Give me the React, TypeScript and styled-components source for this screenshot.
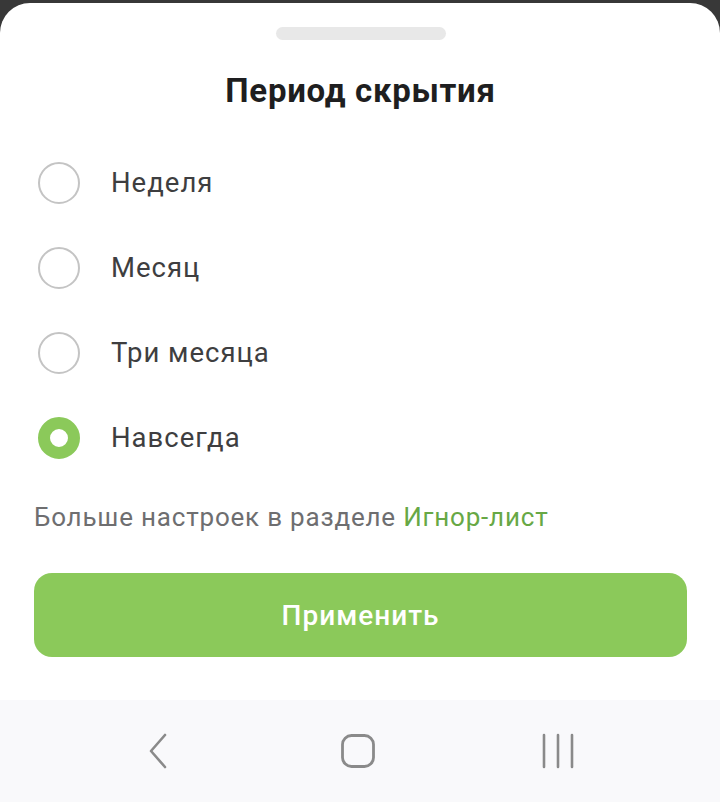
import React, { useState } from 'react'
import styled, { createGlobalStyle } from 'styled-components'

const GlobalStyle = createGlobalStyle`
  html, body {
    margin: 0;
    padding: 0;
    background: #383838;
  }
  body {
    font-family: Roboto, "Noto Sans", "Liberation Sans", sans-serif;
    -webkit-font-smoothing: antialiased;
  }
`

const periods = ['Неделя', 'Месяц', 'Три месяца', 'Навсегда']

const App: React.FC = () => {
  const [selected, setSelected] = useState(3)

  return (
    <Screen>
      <GlobalStyle />
      <Sheet>
        <Handle />
        <Title>Период скрытия</Title>
        <OptionList>
          {periods.map((label, i) => (
            <Option key={label} onClick={() => setSelected(i)}>
              <Radio checked={selected === i} />
              <OptionLabel>{label}</OptionLabel>
            </Option>
          ))}
        </OptionList>
        <Hint>
          Больше настроек в разделе <HintLink>Игнор-лист</HintLink>
        </Hint>
        <ApplyButton>Применить</ApplyButton>
      </Sheet>
      <NavBar>
        <NavIcon>
          <svg width="22" height="36" viewBox="0 0 22 36" fill="none">
            <path d="M18 2 L4 18 L18 34" stroke="#8a8a8a" strokeWidth="2.6" strokeLinecap="round" strokeLinejoin="round" />
          </svg>
        </NavIcon>
        <NavIcon>
          <svg width="36" height="36" viewBox="0 0 36 36" fill="none">
            <rect x="2.5" y="2.5" width="31" height="31" rx="9" stroke="#8a8a8a" strokeWidth="2.8" />
          </svg>
        </NavIcon>
        <NavIcon>
          <svg width="32" height="36" viewBox="0 0 32 36" fill="none">
            <path d="M2 2 V34 M16 2 V34 M30 2 V34" stroke="#8a8a8a" strokeWidth="2.6" strokeLinecap="round" />
          </svg>
        </NavIcon>
      </NavBar>
    </Screen>
  )
}

const Screen = styled.div`
  height: 100vh;
  display: flex;
  flex-direction: column;
  padding-top: 3px;
  box-sizing: border-box;
`

const Sheet = styled.div`
  flex: 1;
  background: #ffffff;
  border-radius: 30px 30px 0 0;
  display: flex;
  flex-direction: column;
  padding: 24px 33px 0 34px;
`

const Handle = styled.div`
  align-self: center;
  width: 170px;
  height: 13px;
  border-radius: 7px;
  background: #e8e8e8;
`

const Title = styled.h1`
  margin: 31px 0 0;
  text-align: center;
  font-size: 33px;
  line-height: 40px;
  letter-spacing: 0.7px;
  font-weight: 700;
  color: #1e1e20;
`

const OptionList = styled.div`
  margin-top: 29px;
  display: flex;
  flex-direction: column;
`

const Option = styled.label`
  height: 85px;
  display: flex;
  align-items: center;
  gap: 31px;
  padding-left: 4px;
  cursor: pointer;
`

const Radio = styled.span<{ checked: boolean }>`
  width: 42px;
  height: 42px;
  box-sizing: border-box;
  border-radius: 50%;
  flex-shrink: 0;
  background: #fff;
  border: ${p => (p.checked ? '12px solid #8bc95a' : '2px solid #c4c4c4')};
`

const OptionLabel = styled.span`
  font-size: 27.5px;
  letter-spacing: 1px;
  color: #3e3e40;
`

const Hint = styled.div`
  margin-top: 22px;
  font-size: 26px;
  line-height: 30px;
  letter-spacing: 0.8px;
  color: #6e6e70;
`

const HintLink = styled.span`
  color: #67a845;
`

const ApplyButton = styled.button`
  margin-top: 41px;
  height: 84px;
  border: none;
  border-radius: 18px;
  background: #8bc95a;
  color: #ffffff;
  font-family: inherit;
  font-size: 28px;
  letter-spacing: 1px;
  font-weight: 500;
  cursor: pointer;
`

const NavBar = styled.div`
  height: 102px;
  flex-shrink: 0;
  background: #f9f9fb;
  display: grid;
  grid-template-columns: repeat(3, 200px);
  justify-content: center;
  align-items: center;
  padding-right: 5px;
`

const NavIcon = styled.div`
  display: flex;
  justify-content: center;
  align-items: center;
`

export default App
